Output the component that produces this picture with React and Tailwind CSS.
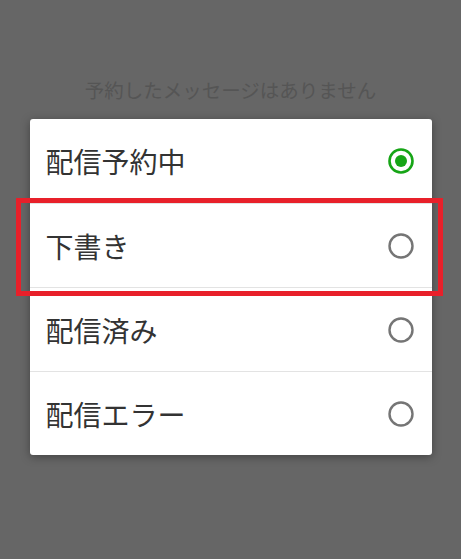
import React from "react";

const options = [
  { label: "配信予約中", checked: true },
  { label: "下書き", checked: false, highlight: true },
  { label: "配信済み", checked: false },
  { label: "配信エラー", checked: false },
];

const Radio = ({ checked }) =>
  checked ? (
    <svg width="28" height="28" viewBox="0 0 28 28">
      <circle cx="14" cy="14" r="11.5" fill="none" stroke="#16a516" strokeWidth="2.6" />
      <circle cx="14" cy="14" r="6" fill="#16a516" />
    </svg>
  ) : (
    <svg width="28" height="28" viewBox="0 0 28 28">
      <circle cx="14" cy="14" r="11.5" fill="none" stroke="#757575" strokeWidth="2.4" />
    </svg>
  );

export default function App() {
  return (
    <div
      className="w-[461px] h-[559px] bg-[#666666] flex flex-col items-center pt-[77px]"
      style={{ fontFamily: '"Noto Sans CJK JP", "Noto Sans", sans-serif' }}
    >
      <p className="text-[19.5px] leading-[26px] text-[#555555]">予約したメッセージはありません</p>

      <div className="mt-[16px] w-[402px] bg-white rounded-[3px] shadow-[0_2px_10px_rgba(0,0,0,0.35)]">
        {options.map((o, i) => (
          <div
            key={o.label}
            className={`relative h-[84px] flex items-center justify-between pl-[16px] pr-[17px] ${
              i > 0 ? "border-t border-[#e3e3e3]" : ""
            }`}
          >
            <span className="text-[28px] leading-none text-[#333333]">{o.label}</span>
            <Radio checked={o.checked} />
            {o.highlight && (
              <div className="absolute left-[-14px] right-[-11px] top-[-6px] bottom-[-9px] border-[5px] border-[#e8202a] pointer-events-none" />
            )}
          </div>
        ))}
      </div>
    </div>
  );
}
